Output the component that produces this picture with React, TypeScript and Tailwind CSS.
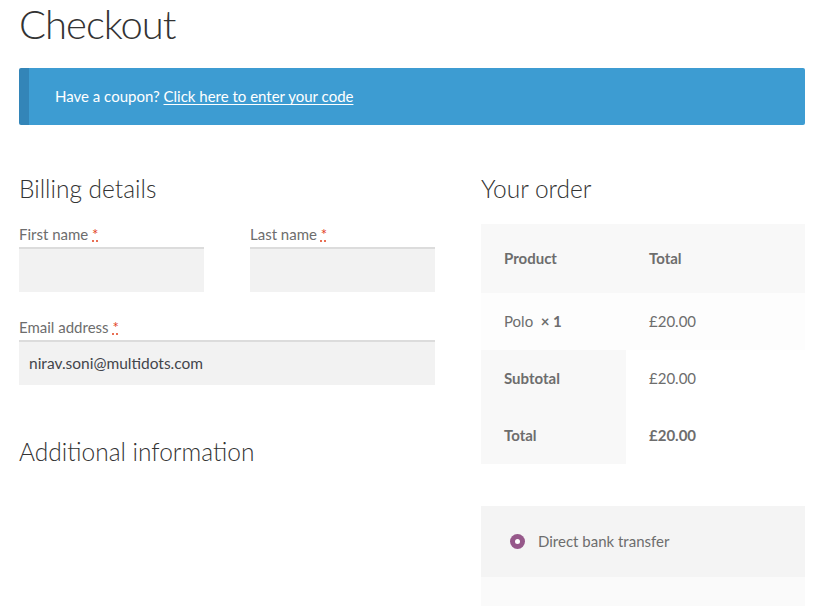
import React from "react";

const font = { fontFamily: "Lato, 'Liberation Sans', sans-serif" };

function Label({ children }: { children: React.ReactNode }) {
  return (
    <div className="text-[15px] leading-[20px] text-[#6d6d6d] h-[20px]">
      {children}{" "}
      <span className="text-[#e2401c] underline decoration-dotted decoration-[#e2401c]">*</span>
    </div>
  );
}

export default function App() {
  return (
    <div className="bg-white w-[824px] h-[606px] overflow-hidden" style={font}>
      <div className="px-[19px]">
        <h1 className="text-[40px] leading-[48px] font-light text-[#333333] h-[68px] tracking-[-1px]">Checkout</h1>
        <div className="h-[57px] bg-[#3d9cd2] border-l-[10px] border-[#3385b8] rounded-[2px] flex items-center pl-[26px] text-[15px] text-white">
          <span>
            Have a coupon? <span className="underline underline-offset-2">Click here to enter your code</span>
          </span>
        </div>
        <div className="flex gap-[46px] mt-[49px]">
          <div className="w-[416px]">
            <h3 className="text-[24.5px] leading-[30px] font-light text-[#333333] h-[50px]">Billing details</h3>
            <div className="flex justify-between">
              <div className="w-[185px]">
                <Label>First name</Label>
                <div className="h-[45px] mt-[3px] bg-[#f2f2f2] border-t-2 border-[#dcdcdc]" />
              </div>
              <div className="w-[185px]">
                <Label>Last name</Label>
                <div className="h-[45px] mt-[3px] bg-[#f2f2f2] border-t-2 border-[#dcdcdc]" />
              </div>
            </div>
            <div className="mt-[25px]">
              <Label>Email address</Label>
              <div className="h-[45px] mt-[3px] bg-[#f2f2f2] border-t-2 border-[#dcdcdc] flex items-center pl-[10px] text-[15.5px] text-[#43454b]">
                nirav.soni@multidots.com
              </div>
            </div>
            <h3 className="text-[24.5px] leading-[30px] font-light text-[#333333] mt-[52px]">Additional information</h3>
          </div>
          <div className="w-[324px]">
            <h3 className="text-[24.5px] leading-[30px] font-light text-[#333333] h-[50px]">Your order</h3>
            <div className="text-[15px] text-[#6d6d6d]">
              <div className="flex h-[69px] bg-[#f8f8f8] items-center font-bold">
                <div className="w-[145px] pl-[23px]">Product</div>
                <div className="pl-[23px]">Total</div>
              </div>
              <div className="flex h-[57px] bg-[#fdfdfd] items-center">
                <div className="w-[145px] pl-[23px]">
                  Polo <span className="font-bold">&nbsp;× 1</span>
                </div>
                <div className="pl-[23px]">£20.00</div>
              </div>
              <div className="flex h-[57px] items-stretch">
                <div className="w-[145px] pl-[23px] bg-[#f8f8f8] font-bold flex items-center">Subtotal</div>
                <div className="pl-[23px] flex items-center">£20.00</div>
              </div>
              <div className="flex h-[57px] items-stretch">
                <div className="w-[145px] pl-[23px] bg-[#f8f8f8] font-bold flex items-center">Total</div>
                <div className="pl-[23px] flex items-center font-bold">£20.00</div>
              </div>
            </div>
            <div className="mt-[42px]">
              <div className="h-[71px] bg-[#f4f4f4] flex items-center pl-[29px] text-[15px] text-[#6d6d6d]">
                <span className="w-[15px] h-[15px] rounded-full bg-[#96588a] flex items-center justify-center mr-[13px]">
                  <span className="w-[5px] h-[5px] rounded-full bg-white" />
                </span>
                Direct bank transfer
              </div>
              <div className="h-[60px] bg-[#fafafa] pt-[29px] pl-[23px] text-[15px] leading-[20px] text-[#6d6d6d]">
                Make your payment directly into our bank account.
              </div>
            </div>
          </div>
        </div>
      </div>
    </div>
  );
}
